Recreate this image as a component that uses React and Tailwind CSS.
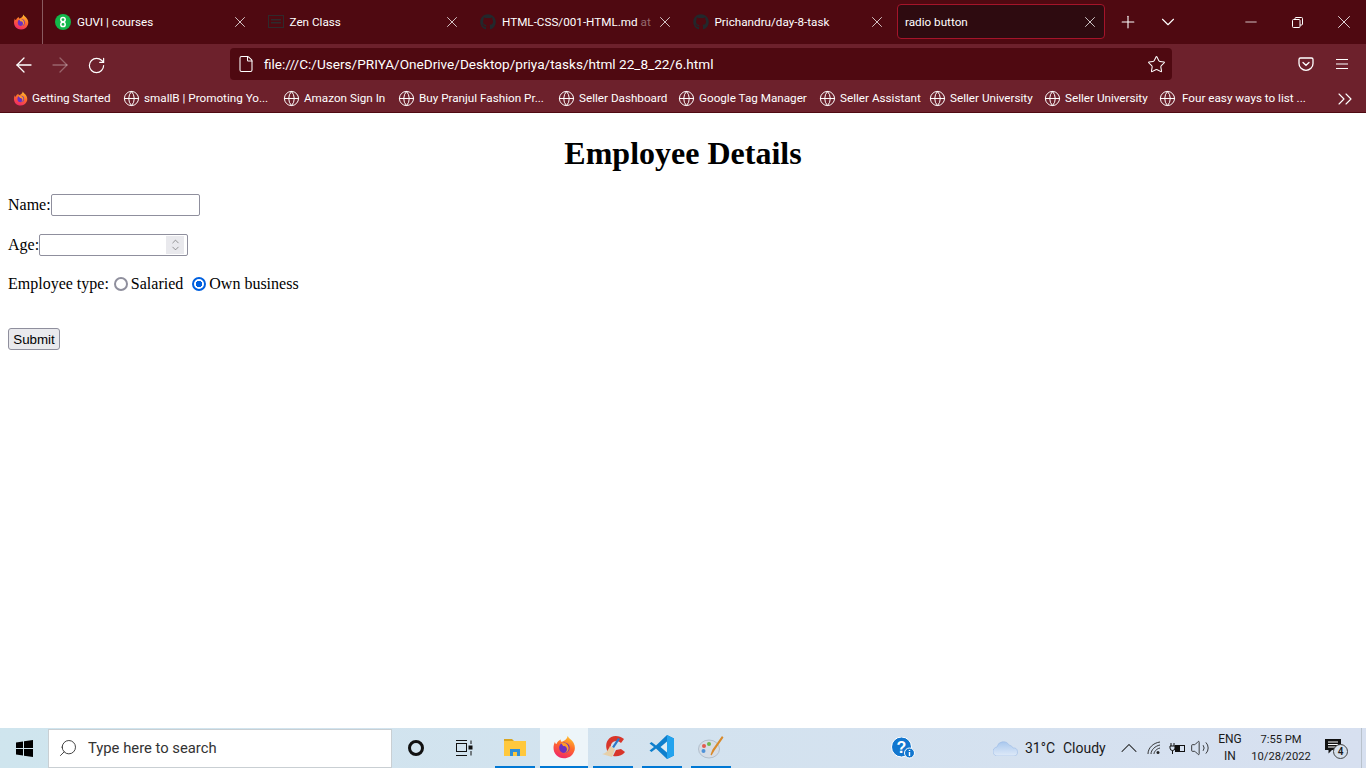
import React from 'react'
import { ArrowLeft, ArrowRight, RotateCw, File, Star, Globe, X, Plus, ChevronDown, ChevronUp, ChevronsRight, Minus, Search, Volume2 } from 'lucide-react'
import { FaGithub } from 'react-icons/fa'

const FirefoxIcon = ({ size = 16, className = '' }) => (
    <svg width={size} height={size} viewBox="0 0 32 32" className={className}>
        <defs>
            <linearGradient id="ffBody" x1="0.7" y1="0" x2="0.3" y2="1">
                <stop offset="0" stopColor="#ffc22e" />
                <stop offset="0.45" stopColor="#ff6a2b" />
                <stop offset="1" stopColor="#f0246a" />
            </linearGradient>
        </defs>
        <path d="M21 1c1 4 6 5 8 10 2 4 2 9 0 12-2 5-7 8-13 8C8 31 2 25 2 17c0-3 1-6 2-8 0 2 1 3 2 3 1-3 3-5 6-6-1 2 0 3 1 3 3-1 7-3 8-8z" fill="url(#ffBody)" />
        <circle cx="16.5" cy="17" r="7" fill="#6b2fc0" />
        <path d="M12 11c4-2 9 0 10 5 1 4-2 8-6 8 3-1 4-3 4-5 0-3-3-5-5-4-1-2-2-3-3-4z" fill="#ff9a2b" />
    </svg>
)

const GuviIcon = () => (
    <svg width="16" height="16" viewBox="0 0 16 16">
        <circle cx="8" cy="8" r="8" fill="#12b74a" />
        <circle cx="8" cy="5.6" r="2.2" fill="none" stroke="#fff" strokeWidth="1.5" />
        <circle cx="8" cy="10.4" r="2.2" fill="none" stroke="#fff" strokeWidth="1.5" />
    </svg>
)

const ZenIcon = () => (
    <svg width="16" height="16" viewBox="0 0 16 16">
        <rect x="0.5" y="1.5" width="15" height="12" fill="none" stroke="#2f2a2c" />
        <rect x="3" y="5" width="10" height="1.5" fill="#2f2a2c" />
        <rect x="3" y="8" width="10" height="1.5" fill="#2f2a2c" />
    </svg>
)

const Tab = ({ icon, title, fade }) => (
    <div className="w-[212.5px] h-[44px] shrink-0 flex items-center pl-[12px] pr-[7px] text-[11.7px] text-white">
        <span className="w-[16px] h-[16px] shrink-0 flex items-center justify-center">{icon}</span>
        <span className="ml-[6px] pt-[1px] flex-1 whitespace-nowrap">
            {title}
            {fade && <span className="text-white/40">{fade}</span>}
        </span>
        <X size={18} strokeWidth={1} className="shrink-0" />
    </div>
)

const Bookmark = ({ label, width, first, textClass = 'ml-[4px]' }) => (
    <div className={`${width} shrink-0 flex items-center text-[11.7px] text-white whitespace-nowrap`}>
        {first ? <FirefoxIcon size={15} /> : <Globe size={17} strokeWidth={1.4} className="-ml-[1px]" />}
        <span className={`${textClass} pt-[1px]`}>{label}</span>
    </div>
)

const TaskApp = ({ children, active, className = '' }) => (
    <div className={`h-[40px] flex items-center justify-center border-b-2 border-[#0078d4] ${active ? 'bg-[#edf5f9]' : ''} ${className}`}>
        {children}
    </div>
)

const radioClass = "appearance-none w-[14px] h-[14px] rounded-full border-2 border-[#8f8f9d] bg-white checked:border-[#0060df] checked:bg-[radial-gradient(circle,#0060df_0_3px,#ffffff_3.5px)]"

export default function App() {
    return (
        <div className="w-[1366px] h-[768px] flex flex-col overflow-hidden bg-white font-['Roboto',sans-serif]">
            {/* tab strip */}
            <div className="h-[44px] shrink-0 flex bg-[#4f0911]">
                <div className="w-[43px] h-[44px] shrink-0 flex items-center justify-center border-r border-[#8a5a60]">
                    <FirefoxIcon size={16} />
                </div>
                <Tab icon={<GuviIcon />} title="GUVI | courses" />
                <Tab icon={<ZenIcon />} title="Zen Class" />
                <Tab icon={<FaGithub size={16} color="#22282c" />} title="HTML-CSS/001-HTML.md" fade=" at" />
                <Tab icon={<FaGithub size={16} color="#22282c" />} title="Prichandru/day-8-task" />
                <div className="w-[208px] h-[35px] mt-[4px] ml-[4px] shrink-0 flex items-center justify-between pl-[7px] pr-[5px] rounded-[4px] border border-[#a5142a] bg-[#2e0b10] text-[11.7px] text-white">
                    <span className="pt-[2px]">radio button</span>
                    <X size={18} strokeWidth={1} />
                </div>
                <Plus size={20} strokeWidth={1.3} className="text-white ml-[13px] mt-[12px]" />
                <ChevronDown size={22} strokeWidth={1.2} className="text-white ml-[19px] mt-[11px]" />
                <Minus size={18} strokeWidth={1} className="text-white ml-[63px] mt-[13px]" />
                <svg width="11" height="11" viewBox="0 0 11 11" className="text-white ml-[32px] mt-[17px]" fill="none" stroke="currentColor">
                    <rect x="0.5" y="2.5" width="7.5" height="8" rx="1" />
                    <path d="M3 2.5V1.5a1 1 0 0 1 1-1h5.5a1 1 0 0 1 1 1V7a1 1 0 0 1-1 1H8" />
                </svg>
                <X size={22} strokeWidth={0.9} className="text-white ml-[30px] mt-[11px]" />
            </div>

            {/* toolbar */}
            <div className="h-[40px] shrink-0 flex items-center bg-[#6d212c]">
                <div className="w-[230px] shrink-0 flex items-center pt-[2px]">
                    <ArrowLeft size={24} strokeWidth={1.3} className="ml-[12px] text-white" />
                    <ArrowRight size={24} strokeWidth={1.3} className="ml-[12px] text-white/30" />
                    <RotateCw size={19} strokeWidth={1.5} className="ml-[15px] text-white" />
                </div>
                <div className="w-[942px] h-[32px] shrink-0 flex items-center rounded-[4px] bg-[#4f0911] text-white">
                    <File size={18} strokeWidth={1.4} className="ml-[7px]" />
                    <span className="ml-[9px] pt-[1px] text-[13.6px] flex-1 whitespace-nowrap">file:///C:/Users/PRIYA/OneDrive/Desktop/priya/tasks/html 22_8_22/6.html</span>
                    <Star size={19} strokeWidth={1.3} className="mr-[6px]" />
                </div>
                <svg width="16" height="16" viewBox="0 0 16 16" className="ml-[126px] text-white" fill="none" stroke="currentColor" strokeWidth="1.3">
                    <path d="M2.5 2h11A1.5 1.5 0 0 1 15 3.500V7.500A7 6.800 0 0 1 1 7.500V3.500A1.500 1.500 0 0 1 2.500 2z" />
                    <path d="M5 6.500L8 9.300 11 6.500" strokeLinecap="round" />
                </svg>
                <svg width="14" height="12" viewBox="0 0 14 12" className="ml-[21px] text-white" fill="none" stroke="currentColor" strokeWidth="1.2">
                    <path d="M1 1.500H13M1 6H13M1 10.500H13" />
                </svg>
            </div>

            {/* bookmarks */}
            <div className="h-[29px] shrink-0 flex items-center pt-[1px] pl-[13px] bg-[#6d212c] border-b border-[#4f0911]">
                <Bookmark first label="Getting Started" width="w-[111px]" />
                <Bookmark label="smallB | Promoting Yo..." width="w-[160px]" />
                <Bookmark label="Amazon Sign In" width="w-[115px]" />
                <Bookmark label="Buy Pranjul Fashion Pr..." width="w-[160px]" />
                <Bookmark label="Seller Dashboard" width="w-[120px]" />
                <Bookmark label="Google Tag Manager" width="w-[141px]" />
                <Bookmark label="Seller Assistant" width="w-[110px]" />
                <Bookmark label="Seller University" width="w-[115px]" />
                <Bookmark label="Seller University" width="w-[115px]" />
                <Bookmark label="Four easy ways to list ..." width="w-[173px]" textClass="ml-[6px]" />
                <ChevronsRight size={24} strokeWidth={1.1} className="text-white" />
            </div>

            {/* page */}
            <div className="flex-1 p-[8px] text-[16px] leading-[18px] text-black font-['Liberation_Serif',serif]">
                <h1 className="text-[32px] leading-[37px] font-bold text-center mt-[14px]">Employee Details</h1>
                <form>
                    <div className="mt-[22px] h-[22px] flex items-center">
                        <label>Name:</label>
                        <input type="text" className="w-[149px] h-[22px] border border-[#8f8f9d] rounded-[2px] bg-white" />
                    </div>
                    <div className="mt-[18px] h-[22px] flex items-center">
                        <label>Age:</label>
                        <div className="relative w-[149px] h-[22px] border border-[#8f8f9d] rounded-[2px] bg-white">
                            <div className="absolute right-[3px] top-[1px] w-[18px] h-[18px] flex flex-col items-center justify-center bg-[#e9e9ed] text-[#6b6b6b]">
                                <ChevronUp size={13} strokeWidth={1.5} className="-mb-[2px]" />
                                <ChevronDown size={13} strokeWidth={1.5} className="-mt-[2px]" />
                            </div>
                        </div>
                    </div>
                    <div className="mt-[19px] flex items-center">
                        <span>Employee type:</span>
                        <input type="radio" name="type" className={`${radioClass} ml-[5px] mr-[3px]`} />
                        <label>Salaried</label>
                        <input type="radio" name="type" defaultChecked className={`${radioClass} ml-[9px] mr-[3px]`} />
                        <label>Own business</label>
                    </div>
                    <button type="button" className="mt-[35px] w-[52px] h-[22px] pt-[1px] border border-[#8f8f9d] rounded-[3px] bg-[#e9e9ed] text-[13.33px] text-black font-['Liberation_Sans',sans-serif]">Submit</button>
                </form>
            </div>

            {/* taskbar */}
            <div className="h-[40px] shrink-0 flex items-center bg-gradient-to-r from-[#cfe5ee] to-[#d7e0f0] text-[#1a1a1a]">
                <svg width="17" height="17" viewBox="0 0 17 17" className="ml-[16px] shrink-0" fill="#000">
                    <path d="M0 2.500L7 1.500V8H0zM8 1.300L17 0V8H8zM0 9H7V15.500L0 14.500zM8 9H17V17L8 15.700z" />
                </svg>
                <div className="w-[344px] h-[39px] ml-[15px] shrink-0 flex items-center bg-white border border-[#c9cfd3] text-[14.8px] text-[#333]">
                    <Search size={20} strokeWidth={1.1} className="ml-[9px] -scale-x-100" />
                    <span className="ml-[10px] pt-[1px]">Type here to search</span>
                </div>
                <div className="w-[16px] h-[16px] ml-[16px] shrink-0 rounded-full border-[3px] border-[#111]"></div>
                <svg width="18" height="16" viewBox="0 0 18 16" className="ml-[31px] shrink-0" fill="none" stroke="#111">
                    <path d="M1 .500H12M1 15.500H12" />
                    <rect x="1.500" y="3.500" width="10" height="8" />
                    <path d="M16 0.500V4M16 11V15.500" />
                    <rect x="14" y="6" width="3" height="3" fill="#111" />
                </svg>
                <TaskApp className="w-[40px] ml-[22px]">
                    <svg width="22" height="18" viewBox="0 0 22 18">
                        <path d="M0 1h8l2 2H0z" fill="#d9a520" />
                        <rect y="3" width="22" height="15" fill="#ffc83d" />
                        <path d="M6 18V11h10v7h-3v-4H9v4z" fill="#2f8fd8" />
                    </svg>
                </TaskApp>
                <TaskApp active className="w-[48px] ml-[5px]">
                    <FirefoxIcon size={24} />
                </TaskApp>
                <TaskApp className="w-[40px] ml-[5px]">
                    <svg width="25" height="24" viewBox="0 0 25 24">
                        <path d="M23 4C18 0 10 0 7 5 4 9 5 15 8 19l4-1C9 14 9 9 12 7c3-2 6-1 8 1z" fill="#d8352a" />
                        <path d="M15 15l5-1 4 3c-3 4-8 5-12 4z" fill="#d8352a" />
                        <path d="M17 3l2 1-6 9-2-1z" fill="#2d78c8" />
                        <path d="M9 11l5 3-3 8-10-3c3 0 6-3 8-8z" fill="#e6cfa8" />
                    </svg>
                </TaskApp>
                <TaskApp className="w-[40px] ml-[9px]">
                    <svg width="26" height="26" viewBox="0 0 26 26">
                        <path d="M18 1l7 3.500v17L18 25 7 14.500 2.500 18 0.500 16.500 5 13 .500 9.500 2.500 8 7 11.500z" fill="#0e7fcd" />
                        <path d="M18 1l7 3.500v17L18 25z" fill="#23a3ee" />
                        <path d="M18 7.500L11.500 13 18 18.500z" fill="#dcecf5" />
                    </svg>
                </TaskApp>
                <TaskApp className="w-[40px] ml-[9px]">
                    <svg width="26" height="24" viewBox="0 0 26 24">
                        <ellipse cx="11" cy="14" rx="10.500" ry="9" fill="#d6dde6" stroke="#9aa7b5" strokeWidth="0.600" />
                        <circle cx="6" cy="11" r="2" fill="#e25b4f" />
                        <circle cx="11" cy="9" r="2" fill="#6db84f" />
                        <circle cx="5.500" cy="16" r="2" fill="#4f92d8" />
                        <path d="M24 1l1.500 1.500-9 13-3 5-1-1 2-5z" fill="#d98a2b" />
                    </svg>
                </TaskApp>
                <svg width="24" height="22" viewBox="0 0 24 22" className="ml-[160px] shrink-0">
                    <circle cx="10.500" cy="10" r="10" fill="#1377cf" stroke="#fff" strokeWidth="1" />
                    <text x="10.500" y="16" fontSize="16" fontWeight="700" textAnchor="middle" fill="#fff" fontFamily="Liberation Sans, sans-serif">?</text>
                    <circle cx="18.500" cy="16" r="5" fill="#1377cf" stroke="#fff" strokeWidth="1" />
                    <path d="M18.500 15V19M18.500 13V14" stroke="#fff" strokeWidth="1.400" />
                </svg>
                <svg width="25" height="15" viewBox="0 0 25 15" className="ml-[78px] shrink-0">
                    <defs>
                        <linearGradient id="cloud" x1="0" y1="0" x2="0" y2="1">
                            <stop offset="0" stopColor="#a9c8ee" />
                            <stop offset="1" stopColor="#dfeaf8" />
                        </linearGradient>
                    </defs>
                    <path d="M5 15a4.500 4.500 0 0 1-1-9 6.500 6.500 0 0 1 12-2 5 5 0 0 1 4 3 4 4 0 0 1 1 8z" fill="url(#cloud)" stroke="#9dbce6" strokeWidth="0.600" />
                </svg>
                <span className="ml-[7px] w-[38px] shrink-0 text-[14px] whitespace-nowrap">31°C</span>
                <span className="w-[48px] shrink-0 text-[14px] whitespace-nowrap">Cloudy</span>
                <ChevronUp size={28} strokeWidth={0.9} className="ml-[4px] shrink-0" />
                <svg width="14" height="14" viewBox="0 0 14 14" className="ml-[4px] shrink-0" fill="none" stroke="#222" strokeWidth="0.900">
                    <path d="M1 13C1 7 6 2 13 1M4 13C4 9 8 5 13 4M7 13C7 11 9 8 13 7" />
                    <circle cx="11" cy="11.500" r="1.500" fill="#222" stroke="none" />
                </svg>
                <svg width="16" height="13" viewBox="0 0 16 13" className="ml-[8px] shrink-0" fill="none" stroke="#111">
                    <rect x="6.500" y="3.500" width="9" height="6" />
                    <rect x="7" y="4" width="4" height="5" fill="#111" stroke="none" />
                    <path d="M2 1V4M5 1V4M1 4H6V6A2.500 2.500 0 0 1 1 6zM3.500 8.500V12" />
                </svg>
                <Volume2 size={20} strokeWidth={1} className="ml-[5px] shrink-0" />
                <div className="ml-[8px] w-[24px] shrink-0 text-center text-[12px] leading-[17px]">
                    <div>ENG</div>
                    <div>IN</div>
                </div>
                <div className="ml-[9px] w-[60px] shrink-0 text-center text-[11.2px] leading-[17px] whitespace-nowrap">
                    <div>7:55 PM</div>
                    <div>10/28/2022</div>
                </div>
                <div className="relative ml-[14px] w-[20px] h-[20px] shrink-0">
                    <svg width="17" height="17" viewBox="0 0 17 17">
                        <path d="M0 1H16V12H7L3.500 15.500V12H0z" fill="#111" />
                        <path d="M3 4H13M3 6.500H13M3 9H10" stroke="#fff" />
                    </svg>
                    <div className="absolute left-[8px] top-[6px] w-[15px] h-[15px] rounded-full bg-[#d5dfeb] border border-[#444] flex items-center justify-center text-[10px] font-semibold">4</div>
                </div>
                <div className="ml-[16px] w-[1px] h-[40px] shrink-0 bg-[#b9c2cc]"></div>
            </div>
        </div>
    )
}
